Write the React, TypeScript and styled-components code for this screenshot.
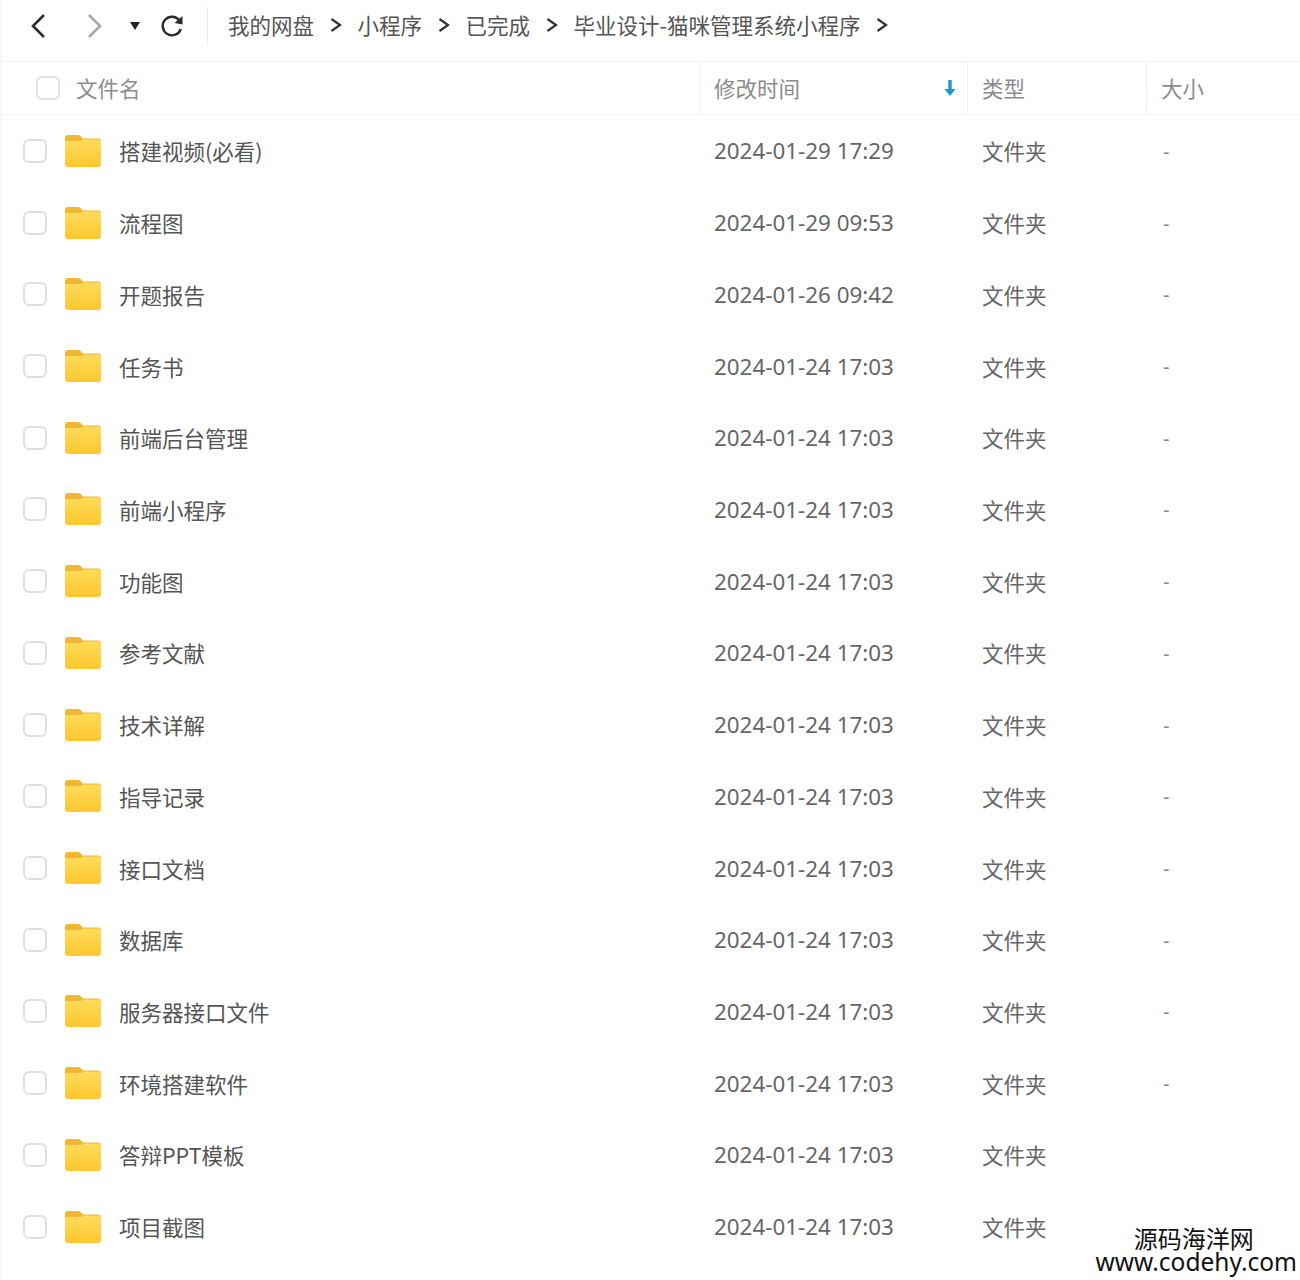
import styled, {createGlobalStyle} from "styled-components";

const files = [
    {name: "搭建视频(必看)", time: "2024-01-29 17:29", size: "-"},
    {name: "流程图", time: "2024-01-29 09:53", size: "-"},
    {name: "开题报告", time: "2024-01-26 09:42", size: "-"},
    {name: "任务书", time: "2024-01-24 17:03", size: "-"},
    {name: "前端后台管理", time: "2024-01-24 17:03", size: "-"},
    {name: "前端小程序", time: "2024-01-24 17:03", size: "-"},
    {name: "功能图", time: "2024-01-24 17:03", size: "-"},
    {name: "参考文献", time: "2024-01-24 17:03", size: "-"},
    {name: "技术详解", time: "2024-01-24 17:03", size: "-"},
    {name: "指导记录", time: "2024-01-24 17:03", size: "-"},
    {name: "接口文档", time: "2024-01-24 17:03", size: "-"},
    {name: "数据库", time: "2024-01-24 17:03", size: "-"},
    {name: "服务器接口文件", time: "2024-01-24 17:03", size: "-"},
    {name: "环境搭建软件", time: "2024-01-24 17:03", size: "-"},
    {name: "答辩PPT模板", time: "2024-01-24 17:03", size: ""},
    {name: "项目截图", time: "2024-01-24 17:03", size: ""},
];

const crumbs = ["我的网盘", "小程序", "已完成", "毕业设计-猫咪管理系统小程序"];

function FolderIcon() {
    return (
        <svg width="38" height="34" viewBox="0 0 38 34">
            <path d="M1 4 Q1 1 4 1 H14 Q16 1 17.500 3 L19 4.500 H34 Q37 4.500 37 7.500 V12 H1 Z" fill="#f2b632"/>
            <path d="M1 7 H17 L19.500 5.500 H34 Q37 5.500 37 8.500 V30 Q37 33 34 33 H4 Q1 33 1 30 Z" fill="url(#folderFill)"/>
            <defs>
                <linearGradient id="folderFill" x1="0" y1="0" x2="0" y2="1">
                    <stop offset="0" stopColor="#ffdc5c"/>
                    <stop offset="1" stopColor="#fdc72e"/>
                </linearGradient>
            </defs>
        </svg>
    );
}

function Chevron({dir, color, size}: { dir: "left" | "right", color: string, size: number }) {
    const points = dir === "left" ? "13,2 2,13 13,24" : "2,2 13,13 2,24";
    return (
        <svg width={size * 15 / 26} height={size} viewBox="0 0 15 26">
            <polyline points={points} fill="none" stroke={color} strokeWidth="2.6"/>
        </svg>
    );
}

function ReloadIcon() {
    return (
        <svg width="24" height="24" viewBox="0 0 24 24">
            <path d="M19.500 6.500 A9.300 9.300 0 1 0 20.800 15" fill="none" stroke="#2c2c2c" strokeWidth="2.400"/>
            <polygon points="22.500,2 22.500,10.500 14.500,9" fill="#2c2c2c"/>
        </svg>
    );
}

function SortArrow() {
    return (
        <svg width="12" height="18" viewBox="0 0 12 18">
            <path d="M4.300 1 H7.700 V10 H11.500 L6 17 L0.500 10 H4.300 Z" fill="#1a94dc"/>
        </svg>
    );
}

function App() {
    return (
        <Page>
            <GlobalStyle/>
            <Toolbar>
                <NavGroup>
                    <NavButton $width={56}><Chevron dir="left" color="#2c2c2c" size={26}/></NavButton>
                    <NavButton $width={56}><Chevron dir="right" color="#a8a8a8" size={26}/></NavButton>
                    <Caret/>
                    <ReloadIcon/>
                </NavGroup>
                <Breadcrumbs>
                    {crumbs.map(crumb => (
                        <Crumb key={crumb}>
                            {crumb}
                            <Separator>
                                <svg width="12" height="16" viewBox="0 0 12 16">
                                    <polyline points="1.500,2 10,8 1.500,14" fill="none" stroke="#333" strokeWidth="2.200"/>
                                </svg>
                            </Separator>
                        </Crumb>
                    ))}
                </Breadcrumbs>
            </Toolbar>
            <TableHead>
                <NameHead>
                    <Checkbox/>
                    <HeadLabel>文件名</HeadLabel>
                </NameHead>
                <HeadCell>
                    <HeadLabel>修改时间</HeadLabel>
                    <SortSlot><SortArrow/></SortSlot>
                </HeadCell>
                <HeadCell><HeadLabel>类型</HeadLabel></HeadCell>
                <HeadCell><HeadLabel>大小</HeadLabel></HeadCell>
            </TableHead>
            <Rows>
                {files.map(file => (
                    <Row key={file.name}>
                        <NameCell>
                            <Checkbox/>
                            <FolderIcon/>
                            <FileName>{file.name}</FileName>
                        </NameCell>
                        <TimeCell>{file.time}</TimeCell>
                        <TypeCell>文件夹</TypeCell>
                        <SizeCell>{file.size}</SizeCell>
                    </Row>
                ))}
            </Rows>
            <Watermark>
                <WatermarkTitle>源码海洋网</WatermarkTitle>
                <WatermarkUrl>www.codehy.com</WatermarkUrl>
            </Watermark>
        </Page>
    );
}

const GlobalStyle = createGlobalStyle`
  html, body {
    margin: 0;
    padding: 0;
    background: #fff;
  }
`

const COLUMNS = "698px 268px 179px 1fr";
const CJK = `"Noto Sans CJK SC", "Noto Sans", sans-serif`;

const Page = styled.div`
  position: relative;
  width: 1300px;
  height: 1280px;
  overflow: hidden;
  background: #fff;
  font-family: ${CJK};
  box-sizing: border-box;
  border-left: 1px solid #f5f5f5;
`

const Toolbar = styled.header`
  height: 62px;
  box-sizing: border-box;
  display: flex;
  align-items: center;
  padding-left: 30px;
  border-bottom: 1px solid #f2f2f2;
`

const NavGroup = styled.div`
  display: flex;
  align-items: center;
  width: 177px;
  height: 40px;
  margin-bottom: 9px;
  border-right: 1px solid #ececec;
  box-sizing: border-box;
`

const NavButton = styled.span<{ $width: number }>`
  width: ${p => p.$width}px;
  display: flex;
  align-items: center;
`

const Caret = styled.span`
  width: 0;
  height: 0;
  margin: 0 20px 0 -13px;
  border-left: 5.500px solid transparent;
  border-right: 5.500px solid transparent;
  border-top: 8px solid #222;
`

const Breadcrumbs = styled.nav`
  display: flex;
  align-items: center;
  padding-left: 20px;
  margin-bottom: 11px;
`

const Crumb = styled.span`
  display: flex;
  align-items: center;
  font-size: 21.500px;
  line-height: 30px;
  color: #555;
`

const Separator = styled.span`
  display: flex;
  width: 43.500px;
  justify-content: center;
`

const TableHead = styled.div`
  display: grid;
  grid-template-columns: ${COLUMNS};
  height: 53px;
  box-sizing: border-box;
  border-bottom: 1px solid #f5f5f5;
`

const NameHead = styled.div`
  display: flex;
  align-items: center;
  gap: 16px;
  padding-left: 35px;
`

const HeadCell = styled.div`
  display: flex;
  align-items: center;
  justify-content: space-between;
  padding-left: 14px;
  border-left: 1px solid #f0f0f0;
`

const HeadLabel = styled.span`
  font-size: 21.500px;
  color: #8c8c8c;
  margin-bottom: 2px;
`

const SortSlot = styled.span`
  display: flex;
  margin-right: 11px;
`

const Checkbox = styled.span`
  display: block;
  flex: none;
  width: 24px;
  height: 24px;
  box-sizing: border-box;
  border: 2px solid #dfdfdf;
  border-radius: 6px;
  background: #fff;
`

const Rows = styled.div`
  display: flex;
  flex-direction: column;
`

const Row = styled.div`
  display: grid;
  grid-template-columns: ${COLUMNS};
  align-items: center;
  height: 71.730px;
`

const NameCell = styled.div`
  display: flex;
  align-items: center;
  gap: 17px;
  padding-left: 22px;
`

const FileName = styled.span`
  font-size: 21.500px;
  color: #555;
  white-space: nowrap;
`

const TimeCell = styled.div`
  padding-left: 15px;
  font-family: "Noto Sans", sans-serif;
  font-size: 22.400px;
  color: #666;
`

const TypeCell = styled.div`
  padding-left: 15px;
  font-size: 21.500px;
  color: #666;
`

const SizeCell = styled.div`
  padding: 1px 0 0 17px;
  font-family: "Noto Sans", sans-serif;
  font-size: 20px;
  color: #8c8c8c;
`

const Watermark = styled.div`
  position: absolute;
  right: 3px;
  bottom: 5px;
  display: flex;
  flex-direction: column;
  align-items: center;
  color: #111;
`

const WatermarkTitle = styled.span`
  font-size: 24px;
  line-height: 22px;
  margin-right: 5px;
`

const WatermarkUrl = styled.span`
  font-family: "Noto Sans", sans-serif;
  font-size: 24.500px;
  line-height: 26px;
`

export default App;
